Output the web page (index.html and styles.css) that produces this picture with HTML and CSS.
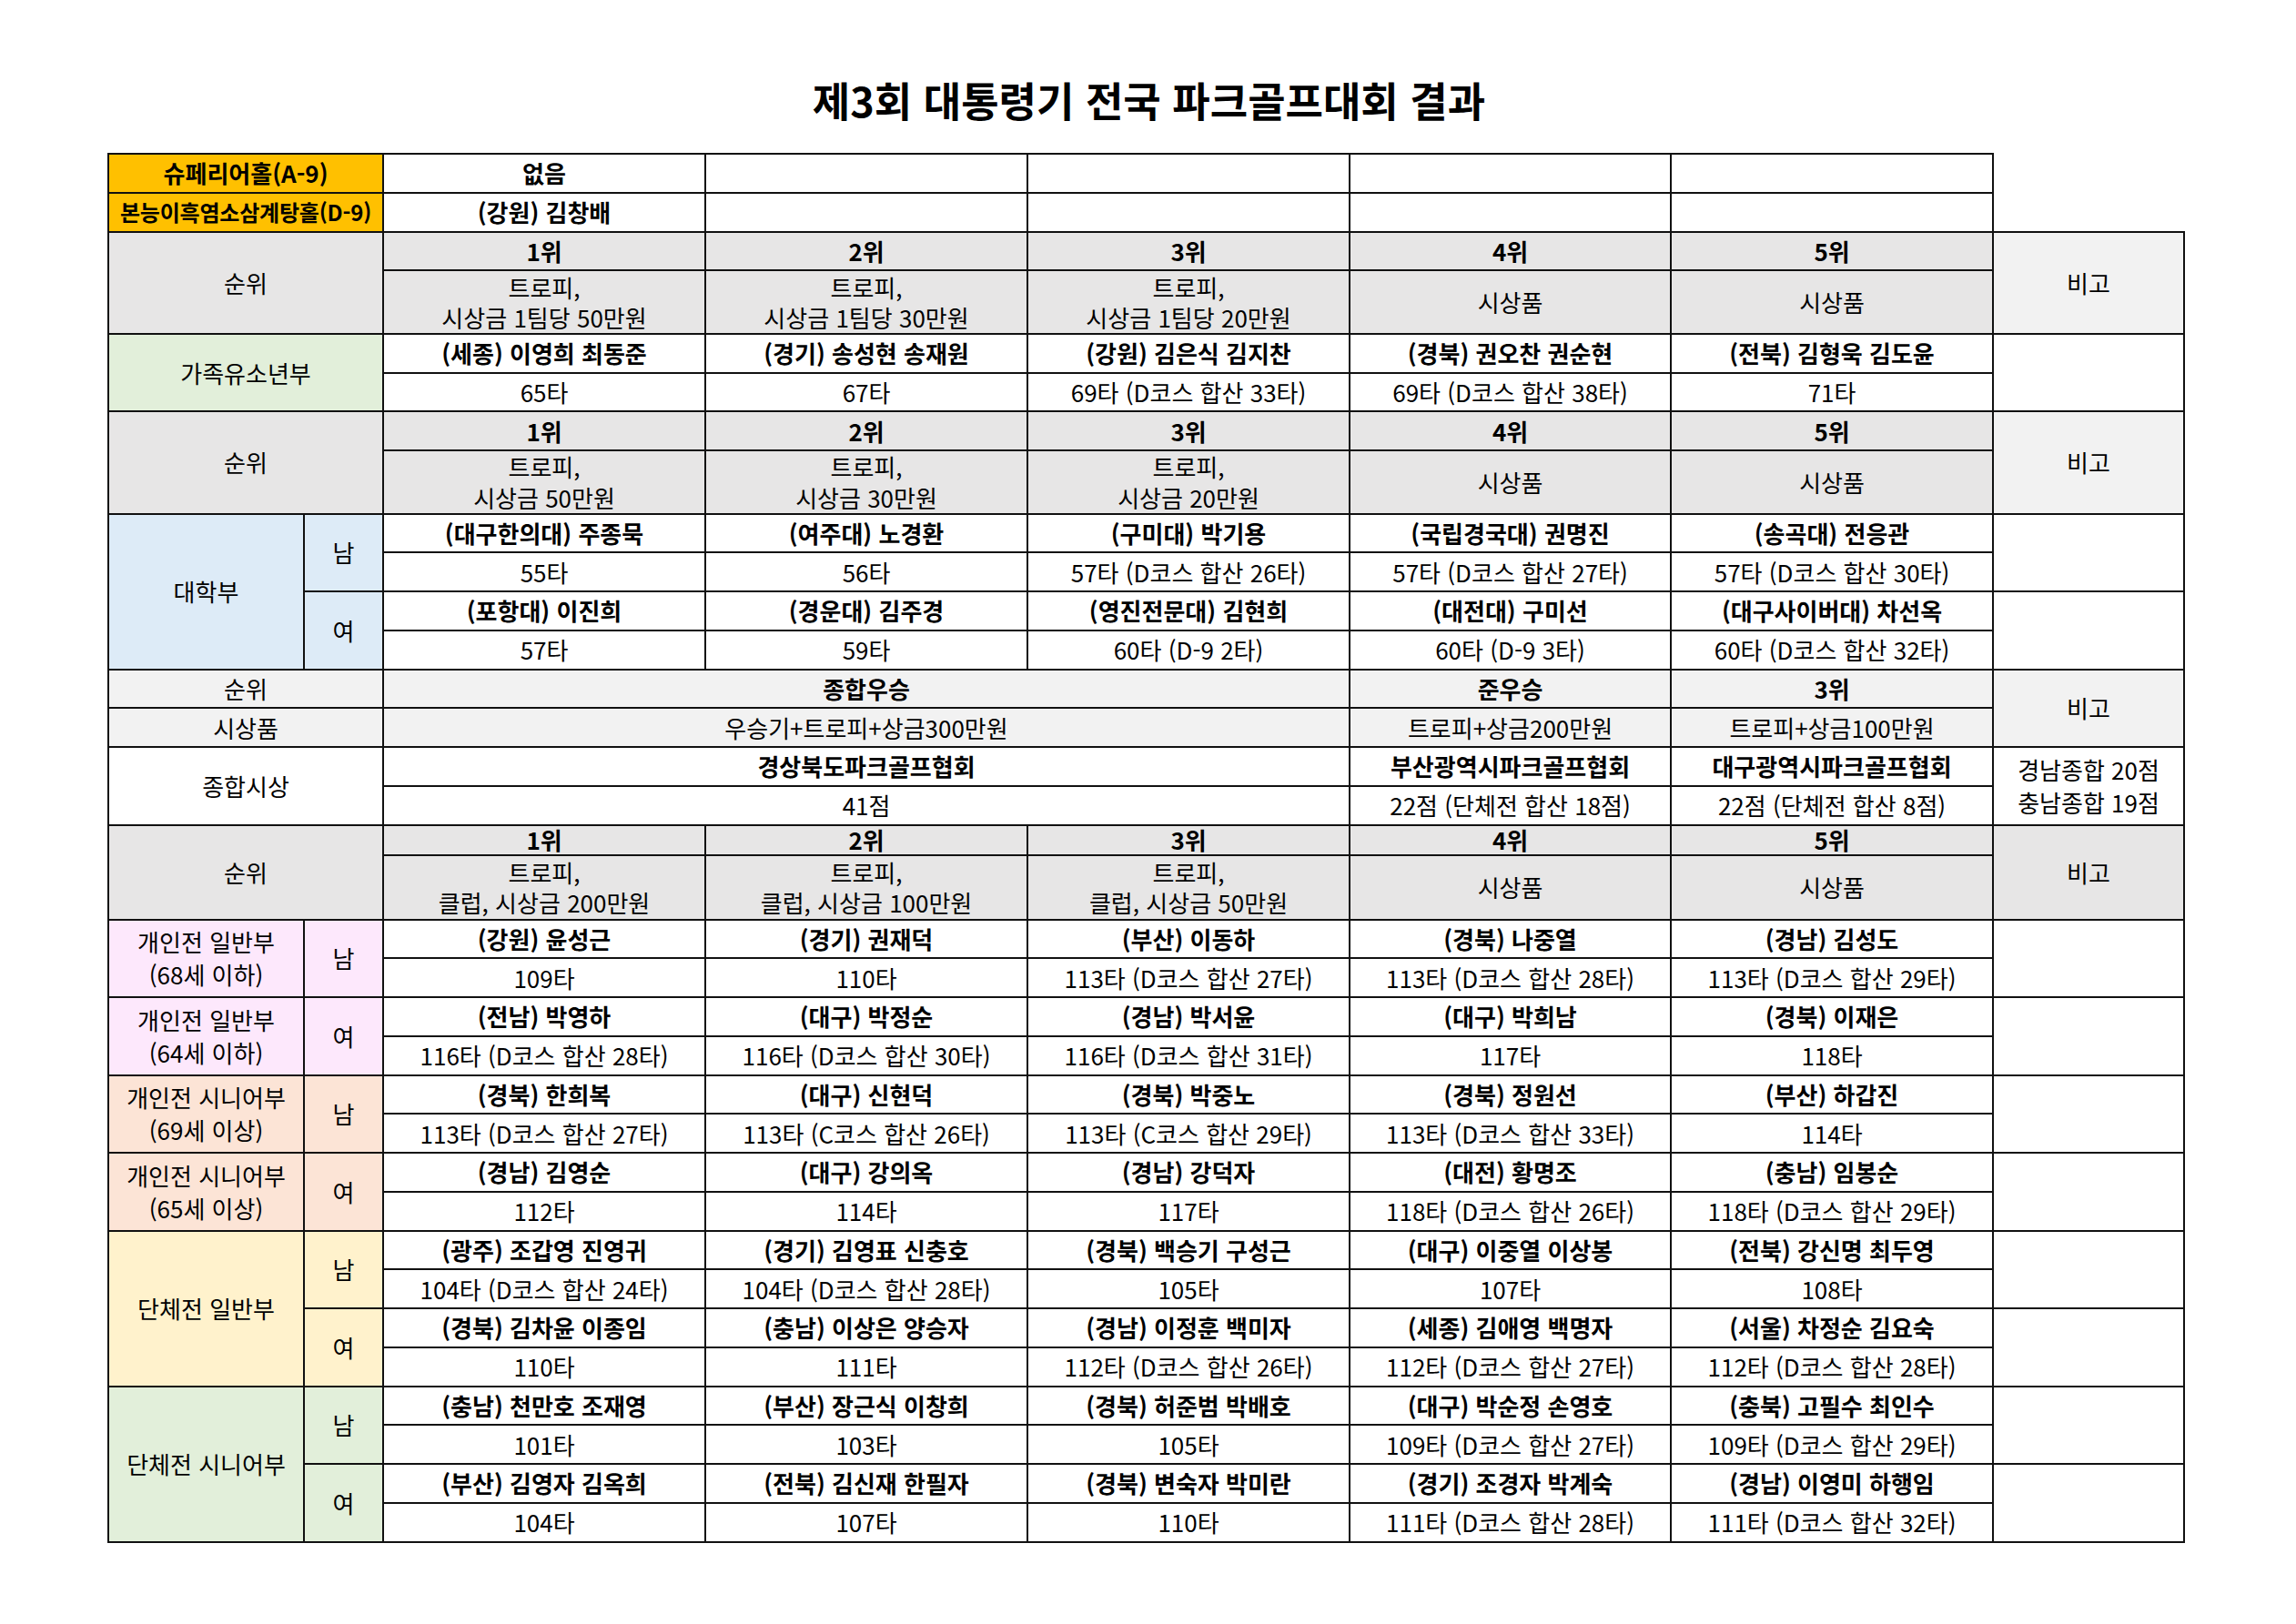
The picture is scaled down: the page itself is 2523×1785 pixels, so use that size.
FILE: index.html
```html
<!DOCTYPE html>
<html lang="ko">
<head>
<meta charset="utf-8">
<title>제3회 대통령기 전국 파크골프대회 결과</title>
<link rel="stylesheet" href="styles.css">
</head>
<body>
<div class="page">
  <h1 class="title">제3회 대통령기 전국 파크골프대회 결과</h1>
  <table class="results">
    <colgroup>
      <col class="c-l1"><col class="c-l2">
      <col class="c-d"><col class="c-d"><col class="c-d"><col class="c-d5"><col class="c-d">
      <col class="c-note">
    </colgroup>
    <tbody>
      <tr class="r">
        <td colspan="2" class="gold b">슈페리어홀(A-9)</td>
        <td class="b">없음</td><td></td><td></td><td></td><td></td>
        <td rowspan="2" class="void"></td>
      </tr>
      <tr class="r">
        <td colspan="2" class="gold b fit">본능이흑염소삼계탕홀(D-9)</td>
        <td class="b">(강원) 김창배</td><td></td><td></td><td></td><td></td>
      </tr>

      <tr class="r">
        <td colspan="2" rowspan="2" class="gray">순위</td>
        <td class="gray b">1위</td><td class="gray b">2위</td><td class="gray b">3위</td><td class="gray b">4위</td><td class="gray b">5위</td>
        <td rowspan="2" class="light">비고</td>
      </tr>
      <tr class="two">
        <td class="gray hl">트로피,<br>시상금 1팀당 50만원</td>
        <td class="gray hl">트로피,<br>시상금 1팀당 30만원</td>
        <td class="gray hl">트로피,<br>시상금 1팀당 20만원</td>
        <td class="gray">시상품</td>
        <td class="gray">시상품</td>
      </tr>

      <tr class="r">
        <td colspan="2" rowspan="2" class="green">가족유소년부</td>
        <td class="b">(세종) 이영희 최동준</td><td class="b">(경기) 송성현 송재원</td><td class="b">(강원) 김은식 김지찬</td><td class="b">(경북) 권오찬 권순현</td><td class="b">(전북) 김형욱 김도윤</td>
        <td rowspan="2"></td>
      </tr>
      <tr class="r">
        <td>65타</td><td>67타</td><td>69타 (D코스 합산 33타)</td><td>69타 (D코스 합산 38타)</td><td>71타</td>
      </tr>

      <tr class="r">
        <td colspan="2" rowspan="2" class="gray">순위</td>
        <td class="gray b">1위</td><td class="gray b">2위</td><td class="gray b">3위</td><td class="gray b">4위</td><td class="gray b">5위</td>
        <td rowspan="2" class="light">비고</td>
      </tr>
      <tr class="two">
        <td class="gray hl">트로피,<br>시상금 50만원</td>
        <td class="gray hl">트로피,<br>시상금 30만원</td>
        <td class="gray hl">트로피,<br>시상금 20만원</td>
        <td class="gray">시상품</td>
        <td class="gray">시상품</td>
      </tr>

      <tr class="r">
        <td rowspan="4" class="blue">대학부</td>
        <td rowspan="2" class="blue">남</td>
        <td class="b">(대구한의대) 주종묵</td><td class="b">(여주대) 노경환</td><td class="b">(구미대) 박기용</td><td class="b">(국립경국대) 권명진</td><td class="b">(송곡대) 전응관</td>
        <td rowspan="2"></td>
      </tr>
      <tr class="r">
        <td>55타</td><td>56타</td><td>57타 (D코스 합산 26타)</td><td>57타 (D코스 합산 27타)</td><td>57타 (D코스 합산 30타)</td>
      </tr>
      <tr class="r">
        <td rowspan="2" class="blue">여</td>
        <td class="b">(포항대) 이진희</td><td class="b">(경운대) 김주경</td><td class="b">(영진전문대) 김현희</td><td class="b">(대전대) 구미선</td><td class="b">(대구사이버대) 차선옥</td>
        <td rowspan="2"></td>
      </tr>
      <tr class="r">
        <td>57타</td><td>59타</td><td>60타 (D-9 2타)</td><td>60타 (D-9 3타)</td><td>60타 (D코스 합산 32타)</td>
      </tr>

      <tr class="r">
        <td colspan="2" class="light">순위</td>
        <td colspan="3" class="light b">종합우승</td>
        <td class="light b">준우승</td>
        <td class="light b">3위</td>
        <td rowspan="2" class="light">비고</td>
      </tr>
      <tr class="r">
        <td colspan="2" class="light">시상품</td>
        <td colspan="3" class="light">우승기+트로피+상금300만원</td>
        <td class="light">트로피+상금200만원</td>
        <td class="light">트로피+상금100만원</td>
      </tr>
      <tr class="r">
        <td colspan="2" rowspan="2">종합시상</td>
        <td colspan="3" class="b">경상북도파크골프협회</td>
        <td class="b">부산광역시파크골프협회</td>
        <td class="b">대구광역시파크골프협회</td>
        <td rowspan="2" class="ml">경남종합 20점<br>충남종합 19점</td>
      </tr>
      <tr class="r">
        <td colspan="3">41점</td>
        <td>22점 (단체전 합산 18점)</td>
        <td>22점 (단체전 합산 8점)</td>
      </tr>

      <tr class="short">
        <td colspan="2" rowspan="2" class="gray">순위</td>
        <td class="gray b">1위</td><td class="gray b">2위</td><td class="gray b">3위</td><td class="gray b">4위</td><td class="gray b">5위</td>
        <td rowspan="2" class="gray">비고</td>
      </tr>
      <tr class="two2">
        <td class="gray hl">트로피,<br>클럽, 시상금 200만원</td>
        <td class="gray hl">트로피,<br>클럽, 시상금 100만원</td>
        <td class="gray hl">트로피,<br>클럽, 시상금 50만원</td>
        <td class="gray">시상품</td>
        <td class="gray">시상품</td>
      </tr>

      <tr class="r">
        <td rowspan="2" class="pink ml">개인전 일반부<br>(68세 이하)</td>
        <td rowspan="2" class="pink">남</td>
        <td class="b">(강원) 윤성근</td><td class="b">(경기) 권재덕</td><td class="b">(부산) 이동하</td><td class="b">(경북) 나중열</td><td class="b">(경남) 김성도</td>
        <td rowspan="2"></td>
      </tr>
      <tr class="r">
        <td>109타</td><td>110타</td><td>113타 (D코스 합산 27타)</td><td>113타 (D코스 합산 28타)</td><td>113타 (D코스 합산 29타)</td>
      </tr>
      <tr class="r">
        <td rowspan="2" class="pink ml">개인전 일반부<br>(64세 이하)</td>
        <td rowspan="2" class="pink">여</td>
        <td class="b">(전남) 박영하</td><td class="b">(대구) 박정순</td><td class="b">(경남) 박서윤</td><td class="b">(대구) 박희남</td><td class="b">(경북) 이재은</td>
        <td rowspan="2"></td>
      </tr>
      <tr class="r">
        <td>116타 (D코스 합산 28타)</td><td>116타 (D코스 합산 30타)</td><td>116타 (D코스 합산 31타)</td><td>117타</td><td>118타</td>
      </tr>
      <tr class="r">
        <td rowspan="2" class="peach ml">개인전 시니어부<br>(69세 이상)</td>
        <td rowspan="2" class="peach">남</td>
        <td class="b">(경북) 한희복</td><td class="b">(대구) 신현덕</td><td class="b">(경북) 박중노</td><td class="b">(경북) 정원선</td><td class="b">(부산) 하갑진</td>
        <td rowspan="2"></td>
      </tr>
      <tr class="r">
        <td>113타 (D코스 합산 27타)</td><td>113타 (C코스 합산 26타)</td><td>113타 (C코스 합산 29타)</td><td>113타 (D코스 합산 33타)</td><td>114타</td>
      </tr>
      <tr class="r">
        <td rowspan="2" class="peach ml">개인전 시니어부<br>(65세 이상)</td>
        <td rowspan="2" class="peach">여</td>
        <td class="b">(경남) 김영순</td><td class="b">(대구) 강의옥</td><td class="b">(경남) 강덕자</td><td class="b">(대전) 황명조</td><td class="b">(충남) 임봉순</td>
        <td rowspan="2"></td>
      </tr>
      <tr class="r">
        <td>112타</td><td>114타</td><td>117타</td><td>118타 (D코스 합산 26타)</td><td>118타 (D코스 합산 29타)</td>
      </tr>

      <tr class="r">
        <td rowspan="4" class="yellow">단체전 일반부</td>
        <td rowspan="2" class="yellow">남</td>
        <td class="b">(광주) 조갑영 진영귀</td><td class="b">(경기) 김영표 신충호</td><td class="b">(경북) 백승기 구성근</td><td class="b">(대구) 이중열 이상봉</td><td class="b">(전북) 강신명 최두영</td>
        <td rowspan="2"></td>
      </tr>
      <tr class="r">
        <td>104타 (D코스 합산 24타)</td><td>104타 (D코스 합산 28타)</td><td>105타</td><td>107타</td><td>108타</td>
      </tr>
      <tr class="r">
        <td rowspan="2" class="yellow">여</td>
        <td class="b">(경북) 김차윤 이종임</td><td class="b">(충남) 이상은 양승자</td><td class="b">(경남) 이정훈 백미자</td><td class="b">(세종) 김애영 백명자</td><td class="b">(서울) 차정순 김요숙</td>
        <td rowspan="2"></td>
      </tr>
      <tr class="r">
        <td>110타</td><td>111타</td><td>112타 (D코스 합산 26타)</td><td>112타 (D코스 합산 27타)</td><td>112타 (D코스 합산 28타)</td>
      </tr>

      <tr class="r">
        <td rowspan="4" class="green">단체전 시니어부</td>
        <td rowspan="2" class="green">남</td>
        <td class="b">(충남) 천만호 조재영</td><td class="b">(부산) 장근식 이창희</td><td class="b">(경북) 허준범 박배호</td><td class="b">(대구) 박순정 손영호</td><td class="b">(충북) 고필수 최인수</td>
        <td rowspan="2"></td>
      </tr>
      <tr class="r">
        <td>101타</td><td>103타</td><td>105타</td><td>109타 (D코스 합산 27타)</td><td>109타 (D코스 합산 29타)</td>
      </tr>
      <tr class="r">
        <td rowspan="2" class="green">여</td>
        <td class="b">(부산) 김영자 김옥희</td><td class="b">(전북) 김신재 한필자</td><td class="b">(경북) 변숙자 박미란</td><td class="b">(경기) 조경자 박계숙</td><td class="b">(경남) 이영미 하행임</td>
        <td rowspan="2"></td>
      </tr>
      <tr class="r">
        <td>104타</td><td>107타</td><td>110타</td><td>111타 (D코스 합산 28타)</td><td>111타 (D코스 합산 32타)</td>
      </tr>
    </tbody>
  </table>
</div>
</body>
</html>
```

FILE: styles.css
```css
html, body {
  margin: 0;
  padding: 0;
  background: #ffffff;
}

body {
  font-family: "Noto Sans CJK KR", "Noto Sans", sans-serif;
  color: #000000;
}

.page {
  padding: 80px 0 0 118px;
  width: 2297px;
}

.title {
  margin: 0 0 28px 0;
  font-size: 45px;
  line-height: 60px;
  font-weight: 700;
  text-align: center;
  width: 2297px;
  position: relative;
  left: -4px;
}

.results {
  border-collapse: collapse;
  table-layout: fixed;
  width: 2281px;
  font-size: 26px;
}

.c-l1 { width: 215px; }
.c-l2 { width: 87px; }
.c-d { width: 354px; }
.c-d5 { width: 353px; }
.c-note { width: 210px; }

.results td {
  border: 2px solid #111111;
  padding: 0 4px;
  text-align: center;
  vertical-align: middle;
  white-space: nowrap;
  line-height: 28px;
  font-weight: 400;
}

.results td.void {
  border: none;
  background: transparent;
}

.results td.ml {
  line-height: 36px;
}

.results td.hl {
  line-height: 33.5px;
}

.results td.b {
  font-weight: 700;
}

.results td.fit {
  font-size: 24px;
  letter-spacing: -0.2px;
}

.r td { height: 40.75px; }
.short td { height: 31px; }
.two td { height: 67.5px; }
.two2 td { height: 69px; }

.r td[rowspan], .short td[rowspan] { height: auto; }

.gold { background: #ffc000; }
.gray { background: #e7e6e6; }
.light { background: #f2f2f2; }
.green { background: #e2efda; }
.blue { background: #ddebf7; }
.pink { background: #fde8fc; }
.peach { background: #fce4d6; }
.yellow { background: #fff2cc; }
```
